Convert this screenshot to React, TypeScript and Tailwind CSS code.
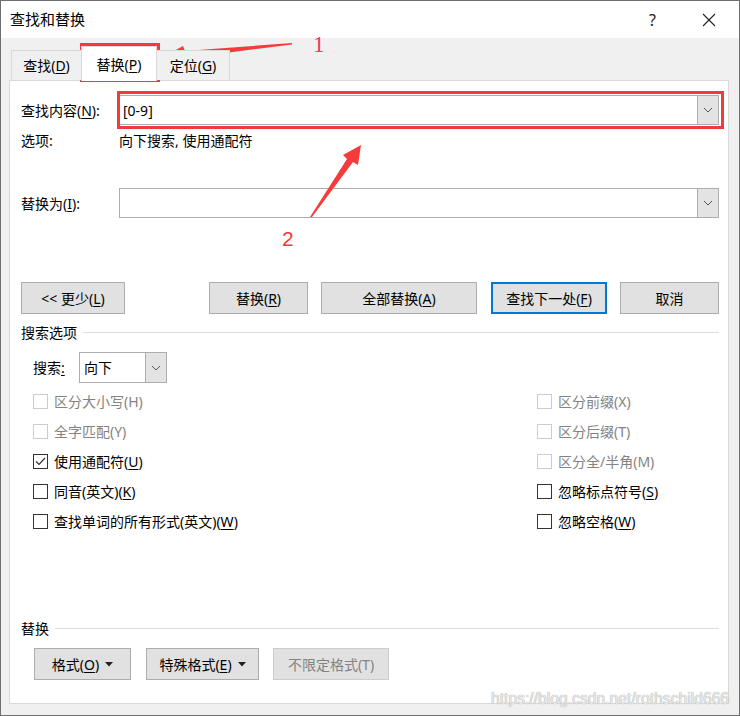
import React from "react";

const Mn = ({ c }: { c: string }) => <span className="underline underline-offset-2">{c}</span>;

const Chevron = () => (
  <svg width="10" height="6" viewBox="0 0 10 6">
    <polyline points="1,1 5,5 9,1" fill="none" stroke="#555" strokeWidth="1" />
  </svg>
);

const Caret = () => (
  <svg width="8" height="5" viewBox="0 0 8 5" className="ml-[6px]">
    <polygon points="0,0 8,0 4,4.5" fill="#222" />
  </svg>
);

const Combo = ({ value }: { value?: string }) => (
  <div className="flex-1 h-[30px] flex border border-[#adadad] bg-white">
    <div className="flex-1 flex items-center pl-[3px] text-[14px]">{value}</div>
    <div className="w-[21px] bg-[#e3e3e3] border-l border-[#adadad] flex items-center justify-center">
      <Chevron />
    </div>
  </div>
);

const Btn = ({ w, children, primary, disabled, className = "" }: { w: string; children: React.ReactNode; primary?: boolean; disabled?: boolean; className?: string }) => (
  <div
    className={`${w} h-[32px] flex items-center justify-center bg-[#e1e1e1] text-[14px] ${
      primary ? "border-2 border-[#0078d7]" : disabled ? "border border-[#cccccc] text-[#838383]" : "border border-[#adadad]"
    } ${className}`}
  >
    {children}
  </div>
);

const Check = ({ label, mn, checked, disabled }: { label: string; mn: string; checked?: boolean; disabled?: boolean }) => (
  <div className={`h-[30px] flex items-center text-[14px] ${disabled ? "text-[#838383]" : "text-black"}`}>
    <div className={`w-[15px] h-[15px] border bg-white flex items-center justify-center ${disabled ? "border-[#cccccc]" : "border-[#333333]"}`}>
      {checked && (
        <svg width="13" height="13" viewBox="0 0 13 13">
          <polyline points="2,6.5 5,9.5 11,3" fill="none" stroke="#333" strokeWidth="1.2" />
        </svg>
      )}
    </div>
    <span className="ml-[6px]">
      {label}
      {disabled ? `(${mn})` : <>(<Mn c={mn} />)</>}
    </span>
  </div>
);

const Section = ({ title }: { title: string }) => (
  <div className="h-[20px] flex items-center text-[14px]">
    <span>{title}</span>
    <div className="flex-1 ml-[6px] h-px bg-[#dcdcdc]" />
  </div>
);

export default function App() {
  return (
    <div className="relative w-[740px] h-[716px] flex flex-col border border-[#6e6e6e] bg-[#f0f0f0] text-black font-['Noto_Sans','Noto_Sans_CJK_SC',sans-serif] overflow-hidden">
      {/* Title bar */}
      <div className="h-[37px] bg-white flex items-center pl-[9px]">
        <span className="text-[15px]">查找和替换</span>
        <div className="flex-1" />
        <span className="text-[16px] mr-[46px] text-[#222]">?</span>
        <svg width="14" height="14" viewBox="0 0 14 14" className="mr-[23px]">
          <path d="M1 1L13 13M13 1L1 13" stroke="#222" strokeWidth="1.1" />
        </svg>
      </div>

      {/* Body */}
      <div className="flex-1 flex flex-col pt-[8px] pl-[8px] pr-[10px] pb-[11px]">
        {/* Tabs */}
        <div className="h-[34px] flex items-end ml-[2px] text-[14px] relative z-10">
          <div className="w-[70px] h-[30px] flex items-center justify-center border-t border-l border-[#d9d9d9] bg-[#f0f0f0]">
            查找(<Mn c="D" />)
          </div>
          <div className="w-[76px] h-[35px] -mb-px flex items-center justify-center border-t border-l border-r border-[#d9d9d9] bg-white">
            替换(<Mn c="P" />)
          </div>
          <div className="w-[73px] h-[30px] flex items-center justify-center border-t border-r border-[#d9d9d9] bg-[#f0f0f0]">
            定位(<Mn c="G" />)
          </div>
        </div>

        {/* Panel */}
        <div className="flex-1 flex flex-col bg-white border border-[#d9d9d9] pl-[11px] pr-[9px] pt-[14px] text-[14px]">
          <div className="flex items-center">
            <div className="w-[98px]">
              查找内容(<Mn c="N" />):
            </div>
            <Combo value="[0-9]" />
          </div>

          <div className="h-[20px] mt-[5px] flex items-center">
            <div className="w-[98px]">选项:</div>
            <div>向下搜索, 使用通配符</div>
          </div>

          <div className="flex items-center mt-[38px]">
            <div className="w-[98px]">
              替换为(<Mn c="I" />):
            </div>
            <Combo />
          </div>

          <div className="flex mt-[64px]">
            <Btn w="w-[104px]">
              &lt;&lt; 更少(<Mn c="L" />)
            </Btn>
            <Btn w="w-[99px]" className="ml-[84px]">
              替换(<Mn c="R" />)
            </Btn>
            <Btn w="w-[156px]" className="ml-[13px]">
              全部替换(<Mn c="A" />)
            </Btn>
            <Btn w="w-[116px]" className="ml-[14px]" primary>
              查找下一处(<Mn c="F" />)
            </Btn>
            <Btn w="w-[99px]" className="ml-[13px]">
              取消
            </Btn>
          </div>

          <div className="mt-[8px]">
            <Section title="搜索选项" />
          </div>

          <div className="pl-[12px]">
            <div className="flex items-center mt-[10px]">
              <div className="w-[46px]">
                搜索<Mn c=":" />
              </div>
              <div className="w-[88px] h-[31px] flex border border-[#adadad] bg-white">
                <div className="flex-1 flex items-center pl-[4px]">向下</div>
                <div className="w-[21px] bg-[#e3e3e3] border-l border-[#adadad] flex items-center justify-center">
                  <Chevron />
                </div>
              </div>
            </div>

            <div className="grid grid-cols-[504px_1fr] mt-[3px]">
              <div className="flex flex-col">
                <Check label="区分大小写" mn="H" disabled />
                <Check label="全字匹配" mn="Y" disabled />
                <Check label="使用通配符" mn="U" checked />
                <Check label="同音(英文)" mn="K" />
                <Check label="查找单词的所有形式(英文)" mn="W" />
              </div>
              <div className="flex flex-col">
                <Check label="区分前缀" mn="X" disabled />
                <Check label="区分后缀" mn="T" disabled />
                <Check label="区分全/半角" mn="M" disabled />
                <Check label="忽略标点符号" mn="S" />
                <Check label="忽略空格" mn="W" />
              </div>
            </div>
          </div>

          <div className="mt-[82px]">
            <Section title="替换" />
          </div>

          <div className="flex mt-[10px]">
            <Btn w="w-[97px]" className="ml-[13px]">
              格式(<Mn c="O" />)
              <Caret />
            </Btn>
            <Btn w="w-[113px]" className="ml-[15px]">
              特殊格式(<Mn c="E" />)
              <Caret />
            </Btn>
            <Btn w="w-[116px]" className="ml-[14px]" disabled>
              不限定格式(T)
            </Btn>
          </div>
        </div>
      </div>

      {/* Watermark */}
      <div className="absolute left-[490px] top-[686px] whitespace-nowrap text-[15.7px] font-['Liberation_Sans',sans-serif] text-[#e8e8e8] [text-shadow:0_0_1px_#8a8a8a] pointer-events-none">
        https://blog.csdn.net/rothschild666
      </div>

      {/* Annotations */}
      <div className="absolute left-[79px] top-[42px] w-[80px] h-[39px] border-[3px] border-[#f23a3a] pointer-events-none" />
      <div className="absolute left-[116px] top-[90px] w-[607px] h-[38px] border-[3px] border-[#f23a3a] pointer-events-none" />
      <div className="absolute left-[312px] top-[32px] text-[23px] leading-none font-['Liberation_Serif',serif] text-[#f2365a]">1</div>
      <div className="absolute left-[281px] top-[227px] text-[21px] leading-none font-['Liberation_Sans',sans-serif] text-[#f23a3a]">2</div>
      <svg className="absolute left-0 top-0 pointer-events-none" width="740" height="716" viewBox="0 0 740 716">
        <polygon points="291,42 184,50 182,45 164,55 184,62 185,57 291,43.5" fill="#f53c3c" />
        <polygon points="309,216 346,158 342,154 360,144 357,164 352,161 311,216" fill="#f53c3c" />
      </svg>
    </div>
  );
}
